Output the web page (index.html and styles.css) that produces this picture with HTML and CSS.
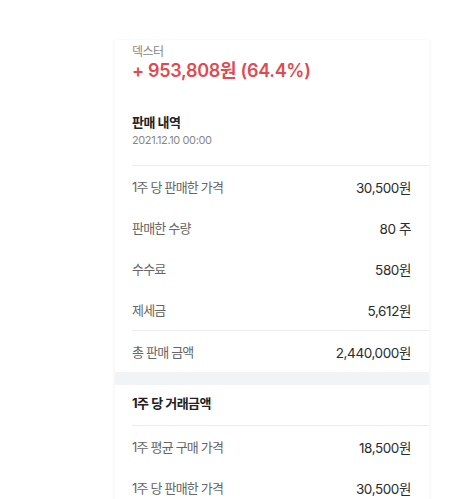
FILE: index.html
```html
<!DOCTYPE html>
<html lang="ko">
<head>
<meta charset="utf-8">
<link rel="stylesheet" href="styles.css">
</head>
<body>
<div class="card">
  <div class="head">
    <div class="name">덱스터</div>
    <div class="amount">+ 953,808원 (64.4%)</div>
  </div>
  <div class="section-title">
    <div class="title">판매 내역</div>
    <div class="date">2021.12.10 00:00</div>
  </div>
  <div class="divider"></div>
  <div class="row"><span class="label">1주 당 판매한 가격</span><span class="value">30,500원</span></div>
  <div class="row"><span class="label">판매한 수량</span><span class="value">80 주</span></div>
  <div class="row"><span class="label">수수료</span><span class="value">580원</span></div>
  <div class="row"><span class="label">제세금</span><span class="value">5,612원</span></div>
  <div class="divider"></div>
  <div class="row"><span class="label">총 판매 금액</span><span class="value">2,440,000원</span></div>
  <div class="band"></div>
  <div class="section-title second">
    <div class="title">1주 당 거래금액</div>
  </div>
  <div class="divider"></div>
  <div class="row"><span class="label">1주 평균 구매 가격</span><span class="value">18,500원</span></div>
  <div class="row"><span class="label">1주 당 판매한 가격</span><span class="value">30,500원</span></div>
</div>
</body>
</html>
```
FILE: styles.css
```css
html, body {
  margin: 0;
  padding: 0;
  background: #ffffff;
  font-family: "Inter", "Noto Sans CJK KR", sans-serif;
  height: 499px;
  overflow: hidden;
}
.card {
  margin: 40px 0 0 115px;
  width: 314px;
  background: #fff;
  box-shadow: -2px 0 2px rgba(0,0,0,0.03), 2px 0 2px rgba(0,0,0,0.03);
  min-height: 480px;
}
.head {
  padding: 4px 18px 0 17px;
}
.name {
  font-size: 12px;
  line-height: 16px;
  color: #888;
  letter-spacing: -0.5px;
}
.amount {
  font-size: 18px;
  line-height: 22px;
  font-weight: 600;
  color: #e04a50;
  letter-spacing: -0.3px;
}
.section-title {
  padding: 31px 18px 0 17px;
}
.section-title.second {
  padding-top: 9px;
  padding-bottom: 12px;
}
.title {
  font-size: 13px;
  line-height: 19px;
  font-weight: 700;
  color: #222;
  letter-spacing: -0.5px;
}
.date {
  font-size: 11px;
  line-height: 16px;
  color: #888;
  letter-spacing: -0.4px;
  padding-bottom: 17px;
}
.divider {
  height: 1px;
  background: #ededed;
  margin-left: 17px;
}
.row {
  height: 41px;
  display: flex;
  align-items: center;
  justify-content: space-between;
  padding: 0 18px 0 17px;
  font-size: 13px;
}
.rows-top .row:last-child {
  height: 42px;
}
.label {
  color: #666;
  letter-spacing: -0.8px;
}
.value {
  color: #2b2b2b;
  font-size: 13.5px;
  letter-spacing: -0.4px;
}
.band {
  height: 13px;
  background: #f2f3f5;
}
```
